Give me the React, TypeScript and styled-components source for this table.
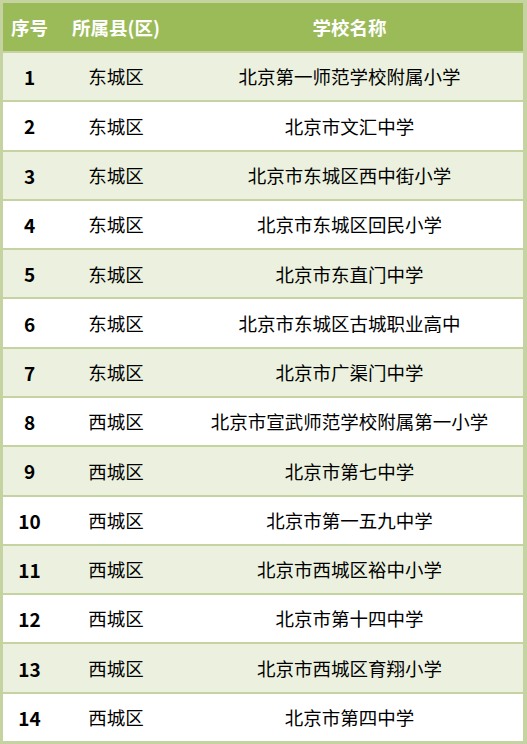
import React from "react";
import styled, { createGlobalStyle } from "styled-components";

const Global = createGlobalStyle`
  html, body { margin: 0; padding: 0; background: #ffffff; }
  body { font-family: "Noto Sans CJK SC", "Noto Sans", sans-serif; }
  * { box-sizing: border-box; }
`;

const Table = styled.div`
  width: 527px;
  height: 744px;
  display: flex;
  flex-direction: column;
  border: 3px solid #c4d3a0;
  border-right-width: 4px;
  background: #ffffff;
`;

const HeaderRow = styled.div`
  height: 48px;
  flex: none;
  display: grid;
  grid-template-columns: 53px 120px 1fr;
  align-items: center;
  background: #9bbb59;
  color: #ffffff;
  font-weight: 700;
  font-size: 18.5px;
`;

const Row = styled.div<{ $alt: boolean }>`
  flex: 1;
  display: grid;
  grid-template-columns: 53px 120px 1fr;
  align-items: center;
  background: ${(p) => (p.$alt ? "#ebf1de" : "#ffffff")};
  border-top: 2px solid #c4d3a0;
  color: #000000;
  font-size: 18.5px;
`;

const Cell = styled.div<{ $bold?: boolean }>`
  text-align: center;
  font-weight: ${(p) => (p.$bold ? 700 : 400)};
  font-size: ${(p) => (p.$bold ? "19px" : "inherit")};
  white-space: nowrap;
  line-height: 1;
`;

const HeadCell = styled.div`
  text-align: center;
  white-space: nowrap;
  line-height: 1;
`;

const rows: [string, string][] = [
  ["东城区", "北京第一师范学校附属小学"],
  ["东城区", "北京市文汇中学"],
  ["东城区", "北京市东城区西中街小学"],
  ["东城区", "北京市东城区回民小学"],
  ["东城区", "北京市东直门中学"],
  ["东城区", "北京市东城区古城职业高中"],
  ["东城区", "北京市广渠门中学"],
  ["西城区", "北京市宣武师范学校附属第一小学"],
  ["西城区", "北京市第七中学"],
  ["西城区", "北京市第一五九中学"],
  ["西城区", "北京市西城区裕中小学"],
  ["西城区", "北京市第十四中学"],
  ["西城区", "北京市西城区育翔小学"],
  ["西城区", "北京市第四中学"],
];

export default function App() {
  return (
    <>
      <Global />
      <Table>
        <HeaderRow>
          <HeadCell>序号</HeadCell>
          <HeadCell>所属县(区)</HeadCell>
          <HeadCell>学校名称</HeadCell>
        </HeaderRow>
        {rows.map(([d, s], i) => (
          <Row key={i} $alt={i % 2 === 0}>
            <Cell $bold>{i + 1}</Cell>
            <Cell>{d}</Cell>
            <Cell>{s}</Cell>
          </Row>
        ))}
      </Table>
    </>
  );
}
